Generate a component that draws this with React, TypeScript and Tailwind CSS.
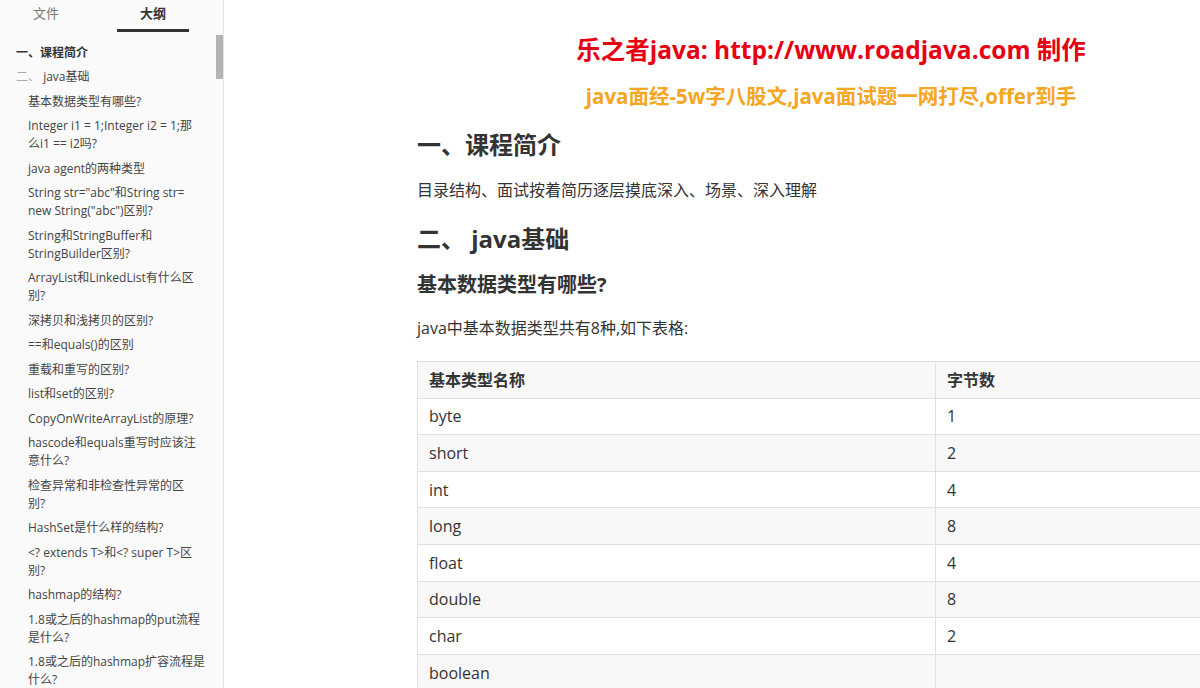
import React from "react";

const font = { fontFamily: '"Open Sans", "Noto Sans CJK SC", sans-serif' };

const items: string[][] = [
  ["基本数据类型有哪些?"],
  ["Integer i1 = 1;Integer i2 = 1;那", "么i1 == i2吗?"],
  ["java agent的两种类型"],
  ['String str="abc"和String str=', 'new String("abc")区别?'],
  ["String和StringBuffer和", "StringBuilder区别?"],
  ["ArrayList和LinkedList有什么区", "别?"],
  ["深拷贝和浅拷贝的区别?"],
  ["==和equals()的区别"],
  ["重载和重写的区别?"],
  ["list和set的区别?"],
  ["CopyOnWriteArrayList的原理?"],
  ["hascode和equals重写时应该注", "意什么?"],
  ["检查异常和非检查性异常的区", "别?"],
  ["HashSet是什么样的结构?"],
  ["<? extends T>和<? super T>区", "别?"],
  ["hashmap的结构?"],
  ["1.8或之后的hashmap的put流程", "是什么?"],
  ["1.8或之后的hashmap扩容流程是", "什么?"],
];

const rows: [string, string][] = [
  ["byte", "1"],
  ["short", "2"],
  ["int", "4"],
  ["long", "8"],
  ["float", "4"],
  ["double", "8"],
  ["char", "2"],
  ["boolean", ""],
];

export default function App() {
  return (
    <div className="flex h-[688px] w-[1200px] overflow-hidden bg-white text-[#333]" style={font}>
      {/* Sidebar */}
      <aside className="relative w-[224px] shrink-0 bg-[#fafafa] border-r border-[#e4e4e4] overflow-hidden">
        <div className="flex pl-[10px] gap-[35px] h-[32px]">
          <div className="w-[72px] flex items-start justify-center pt-[4px] text-[13px] leading-[18px] text-[#777]">
            文件
          </div>
          <div className="w-[72px] flex flex-col items-center pt-[4px]">
            <span className="text-[13px] leading-[18px] font-bold text-[#333]">大纲</span>
            <div className="mt-[7px] h-[3px] w-[72px] bg-[#333]" />
          </div>
        </div>
        <div className="absolute right-0 top-[35px] w-[7px] h-[44px] bg-[#b3b3b3]" />
        <div className="pt-[9px] pr-[20px]">
          <div className="pl-[16px] py-[3px] text-[12px] leading-[18px] font-bold text-[#333]">一、课程简介</div>
          <div className="pl-[16px] pt-[3px] pb-[3.5px] text-[12px] leading-[18px] text-[#444]">
            <span className="text-[#aaa]">二、</span> java基础
          </div>
          {items.map((lines, i) => (
            <div key={i} className="pl-[28px] py-[3.25px] text-[12px] leading-[18px] text-[#444]">
              {lines.map((l, j) => (
                <div key={j} className="whitespace-nowrap">
                  {l}
                </div>
              ))}
            </div>
          ))}
        </div>
      </aside>

      {/* Main */}
      <main className="flex-1 overflow-hidden pl-[193px]">
        <div className="w-[828px] shrink-0 pt-[32px]">
          <div className="text-center text-[24.5px] leading-[36px] font-bold text-[#e60012]">
            乐之者java: http://www.roadjava.com 制作
          </div>
          <div className="mt-[14px] text-center text-[20.5px] leading-[28px] font-bold text-[#f5a623]">
            java面经-5w字八股文,java面试题一网打尽,offer到手
          </div>
          <h1 className="mt-[17px] text-[24px] leading-[36px] font-bold text-[#333]">一、课程简介</h1>
          <p className="mt-[15px] text-[16px] leading-[24px] text-[#333]">
            目录结构、面试按着简历逐层摸底深入、场景、深入理解
          </p>
          <h1 className="mt-[19px] text-[24px] leading-[36px] font-bold text-[#333]">二、 java基础</h1>
          <h2 className="mt-[13px] text-[20px] leading-[30px] font-bold text-[#333]">基本数据类型有哪些?</h2>
          <p className="mt-[16px] text-[16px] leading-[24px] text-[#333]">java中基本数据类型共有8种,如下表格:</p>
          <table className="mt-[21px] w-[828px] border-collapse text-[16px] leading-[24px]">
            <thead>
              <tr className="bg-[#f8f8f8]">
                <th className="w-[518px] border border-[#e0e0e0] px-[11px] py-[5.8px] text-left font-bold">基本类型名称</th>
                <th className="border border-[#e0e0e0] px-[11px] py-[5.8px] text-left font-bold">字节数</th>
              </tr>
            </thead>
            <tbody>
              {rows.map(([a, b], i) => (
                <tr key={i} className={i % 2 === 1 ? "bg-[#f8f8f8]" : "bg-white"}>
                  <td className="border border-[#e0e0e0] px-[11px] py-[5.8px]">{a}</td>
                  <td className="border border-[#e0e0e0] px-[11px] py-[5.8px]">{b}</td>
                </tr>
              ))}
            </tbody>
          </table>
        </div>
      </main>
    </div>
  );
}
